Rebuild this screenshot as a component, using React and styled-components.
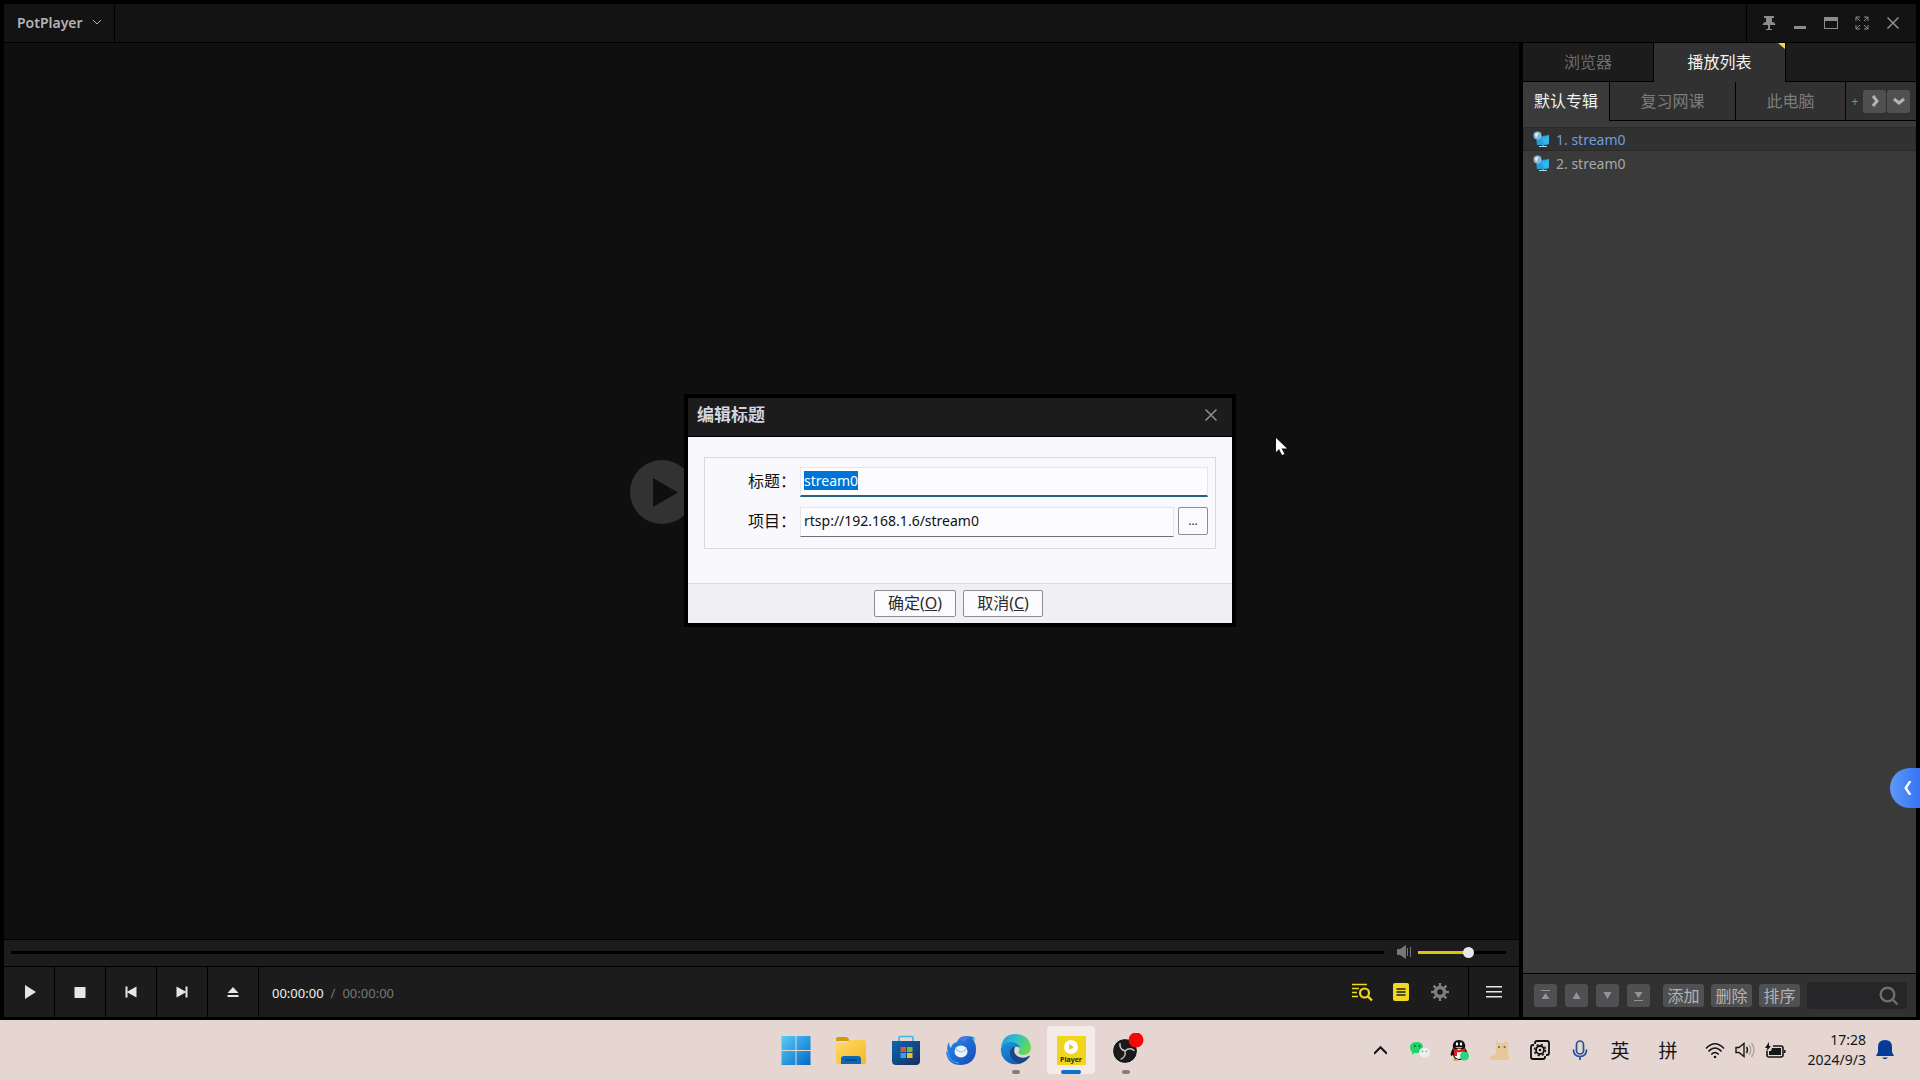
import React, { useEffect, useRef, useState } from "react";
import styled, { createGlobalStyle, css } from "styled-components";

const GlobalStyle = createGlobalStyle`
  * {
    box-sizing: border-box;
  }

  body {
    margin: 0;
    background: #000000;
    font-family: "Noto Sans", "Noto Sans CJK SC", sans-serif;
    overflow: hidden;
  }

  button,
  input {
    font-family: inherit;
    margin: 0;
  }

  button {
    border: 0;
    padding: 0;
    background: none;
    color: inherit;
    cursor: pointer;
  }

  svg {
    display: block;
    flex: none;
  }
`;

const Desktop = styled.div`
  position: relative;
  height: 100vh;
  display: flex;
  flex-direction: column;
`;

const PlayerWindow = styled.div`
  position: relative;
  flex: 1;
  min-height: 0;
  display: flex;
  flex-direction: column;
  gap: 1px;
  padding: 4px 4px 3px;
  background: #000000;
`;

const TitleBar = styled.header`
  height: 38px;
  display: flex;
  gap: 1px;
  flex: none;
`;

const AppMenu = styled.button`
  display: flex;
  align-items: center;
  gap: 8px;
  width: 110px;
  padding: 0 0 2px 13px;
  background: #131313;
  color: #b4b4b4;
  font-size: 14px;
  font-weight: 600;
`;

const TitleSpace = styled.div`
  flex: 1;
  background: #131313;
`;

const WindowButtons = styled.div`
  display: flex;
  align-items: center;
  padding: 0 8px 0 6px;
  background: #131313;
  color: #8c8c8c;
`;

const WindowButton = styled.button`
  width: 31px;
  height: 38px;
  display: flex;
  align-items: center;
  justify-content: center;
`;

const Main = styled.main`
  flex: 1;
  min-height: 0;
  display: flex;
  gap: 4px;
`;

const Player = styled.section`
  flex: 1;
  min-width: 0;
  display: flex;
  flex-direction: column;
  gap: 1px;
`;

const Video = styled.div`
  flex: 1;
  display: flex;
  align-items: center;
  justify-content: center;
  padding: 2px 200px 0 0;
  background: #0f0f0f;
`;

const SeekRow = styled.div`
  height: 26px;
  display: flex;
  align-items: center;
  padding: 0 13px 2px 7px;
  background: #1c1c1c;
  color: #777777;
`;

const track = css`
  height: 3px;
  background: ${({ $fill }) =>
    `linear-gradient(to right, #d8c414 ${$fill}%, #000000 ${$fill}%)`};
`;

const Slider = styled.input`
  appearance: none;
  height: 12px;
  background: none;

  &::-webkit-slider-runnable-track {
    ${track}
  }

  &::-webkit-slider-thumb {
    appearance: none;
    width: ${({ $thumb }) => $thumb}px;
    height: ${({ $thumb }) => $thumb}px;
    margin-top: -4px;
    border-radius: 50%;
    background: #e8e8ec;
  }
`;

const Seek = styled(Slider)`
  flex: 1;
  margin-right: 13px;
`;

const Volume = styled(Slider)`
  width: 88px;
  margin-left: 6px;
`;

const Controls = styled.div`
  height: 50px;
  display: flex;
  gap: 1px;
`;

const ControlButton = styled.button`
  width: 50px;
  display: flex;
  align-items: center;
  justify-content: center;
  background: #1c1c1c;
  color: #e6e6ea;
`;

const Time = styled.div`
  flex: 1;
  display: flex;
  align-items: center;
  gap: 7px;
  padding: 1px 0 0 13px;
  background: #1c1c1c;
  color: #f0f0f0;
  font-size: 13px;

  span {
    color: #777777;
  }
`;

const Tools = styled.div`
  display: flex;
  align-items: center;
  gap: 17px;
  margin-left: -1px;
  padding-right: 17px;
  background: #1c1c1c;
`;

const ToolButton = styled.button`
  width: 22px;
  height: 22px;
  display: flex;
  align-items: center;
  justify-content: center;
  color: ${({ $on }) => ($on ? "#f0d81e" : "#7e7e7e")};
`;

const Sidebar = styled.aside`
  width: 393px;
  flex: none;
  display: flex;
  flex-direction: column;
  gap: 1px;
`;

const Tabs = styled.div`
  height: 38px;
  flex: none;
  display: flex;
  gap: 1px;
`;

const Tab = styled.button`
  position: relative;
  width: ${({ $width }) => $width}px;
  background: #1c1c1c;
  color: #6c6c6c;
  font-size: 16px;
  line-height: 20px;

  ${({ $active }) =>
    $active &&
    css`
      margin-bottom: -1px;
      padding-bottom: 1px;
      background: #313131;
      color: #f2f2f2;
    `}
`;

const Corner = styled.i`
  position: absolute;
  top: 0;
  right: 0;
  border-top: 6px solid #f0d850;
  border-left: 7px solid transparent;
`;

const TabsRest = styled.div`
  flex: 1;
  background: #1c1c1c;
`;

const Album = styled(Tab)`
  background: ${({ $active }) => ($active ? "#3a3a3a" : "#313131")};
  color: ${({ $active }) => ($active ? "#f2f2f2" : "#7c7c7c")};
`;

const AlbumTools = styled.div`
  flex: 1;
  display: flex;
  align-items: center;
  justify-content: flex-end;
  gap: 1px;
  padding-right: 6px;
  background: #313131;
  color: #8c8c8c;
`;

const AddAlbum = styled.button`
  width: 14px;
  font-size: 12px;
`;

const SmallButton = styled.button`
  min-width: ${({ $text }) => ($text ? 41 : 23)}px;
  height: 23px;
  display: flex;
  align-items: center;
  justify-content: center;
  border-radius: 3px;
  background: #505052;
  color: #b4b4b4;
  font-size: 16px;
  line-height: 22px;
`;

const List = styled.ol`
  flex: 1;
  margin: 0;
  padding: 6px 0 0;
  list-style: none;
  background: #3a3a3a;
`;

const Track = styled.li`
  height: 24px;
  display: flex;
  align-items: center;
  gap: 6px;
  padding: 0 9px;
  border: 1px solid ${({ $current }) => ($current ? "#2a2a2a" : "transparent")};
  background: ${({ $current }) => ($current ? "#313131" : "transparent")};
  color: ${({ $current }) => ($current ? "#6c9ee0" : "#a8a8a8")};
  font-size: 14px;
`;

const ListBar = styled.div`
  height: 43px;
  display: flex;
  align-items: center;
  gap: 7px;
  padding: 0 9px 0 11px;
  background: #313131;
`;

const MoveButtons = styled.div`
  display: flex;
  gap: 8px;
  margin-right: 6px;

  button {
    color: #949494;
  }
`;

const Search = styled.label`
  flex: 1;
  min-width: 0;
  height: 27px;
  display: flex;
  align-items: center;
  padding: 0 8px 0 6px;
  border-radius: 3px;
  background: #262628;
  color: #6e6e6e;

  input {
    flex: 1;
    min-width: 0;
    border: 0;
    outline: 0;
    background: none;
    color: #cccccc;
  }
`;

const Overlay = styled.div`
  position: absolute;
  inset: 0;
  display: flex;
  align-items: center;
  justify-content: center;
`;

const Dialog = styled.form`
  width: 552px;
  border: 4px solid #000000;
  background: #f9f9fd;
`;

const DialogTitle = styled.div`
  height: 39px;
  display: flex;
  align-items: center;
  justify-content: space-between;
  padding: 0 14px 3px 9px;
  border-bottom: 1px solid #000000;
  background: #1c1c1c;
  color: #8c8c8c;

  h1 {
    margin: 0;
    color: #d4d4e0;
    font-size: 17px;
    font-weight: 700;
    line-height: 24px;
  }
`;

const DialogBody = styled.div`
  padding: 20px 16px 34px;
`;

const Group = styled.div`
  display: grid;
  grid-template-columns: 85px 1fr;
  column-gap: 10px;
  row-gap: 10px;
  padding: 9px 7px 11px 0;
  border: 1px solid #d8d8de;
  color: #101010;
  font-size: 16px;

  label {
    padding: 2px 0 0 43px;
    line-height: 24px;
    white-space: nowrap;
  }
`;

const Field = styled.div`
  display: flex;
  gap: 4px;
`;

const TextBox = styled.input`
  flex: 1;
  min-width: 0;
  height: 30px;
  padding: 0 3px 2px;
  border: 1px solid #e6e6ea;
  border-bottom: 1px solid #6e6e74;
  outline: 0;
  background: #fcfcfe;
  color: #101010;
  font-size: 14px;

  &:focus {
    border-bottom: 2px solid #22647c;
  }

  &::selection {
    background: #0074d4;
    color: #ffffff;
  }
`;

const PushButton = styled.button`
  width: ${({ $width }) => $width}px;
  height: 27px;
  border: 1px solid #8c8c92;
  border-radius: 2px;
  background: #fbfbfd;
  color: #2c2c2c;
  font-size: 16px;
  line-height: 22px;
`;

const BrowseButton = styled(PushButton)`
  height: 28px;
  font-size: 12px;
`;

const DialogFooter = styled.div`
  height: 40px;
  display: flex;
  align-items: center;
  justify-content: center;
  gap: 7px;
  padding-right: 3px;
  border-top: 1px solid #dadae0;
  background: #f0f0f4;
`;

const SideHandle = styled.button`
  position: absolute;
  right: 0;
  bottom: 272px;
  width: 30px;
  height: 40px;
  display: flex;
  align-items: center;
  justify-content: center;
  padding-left: 5px;
  border-radius: 20px 0 0 20px;
  background: linear-gradient(to right, #6098f8, #3474f4);
  color: #ffffff;
`;

const Pointer = styled.svg`
  position: absolute;
  left: 1276px;
  top: 437px;
`;

const Taskbar = styled.footer`
  height: 60px;
  flex: none;
  display: grid;
  grid-template-columns: 1fr auto 1fr;
  align-items: center;
  background: #e5d6d1;
`;

const Apps = styled.nav`
  grid-column: 2;
  display: flex;
  gap: 7px;
  padding-left: 2px;
`;

const AppButton = styled.button`
  width: 48px;
  height: 48px;
  display: flex;
  flex-direction: column;
  align-items: center;
  justify-content: flex-end;
  gap: 5px;
  border-radius: 4px;
  background: ${({ $active }) => ($active ? "#f4ebe9" : "transparent")};

  &::after {
    content: "";
    width: ${({ $active }) => ($active ? 20 : 8)}px;
    height: 4px;
    border-radius: 2px;
    background: ${({ $active, $running }) =>
      $active ? "#0c70c8" : $running ? "#8a7c76" : "transparent"};
  }
`;

const Tray = styled.div`
  display: flex;
  align-items: center;
  justify-content: flex-end;
  padding-right: 21px;
  color: #161616;
`;

const TrayButton = styled.button`
  width: ${({ $width }) => $width || 40}px;
  height: 40px;
  display: flex;
  align-items: center;
  justify-content: center;
  font-size: 19px;
`;

const Clock = styled.div`
  width: 72px;
  margin-right: 5px;
  text-align: right;
  font-size: 14px;
  line-height: 20px;
`;

const Chevron = ({ d, size = 12, width = 2 }) => (
  <svg width={size} height={size} viewBox="0 0 12 12" fill="none" stroke="currentColor" strokeWidth={width}>
    <path d={d} />
  </svg>
);

const CloseIcon = () => (
  <svg width="14" height="14" viewBox="0 0 14 14" stroke="currentColor" strokeWidth="1.6">
    <path d="M1.5 1.5l11 11M12.5 1.5l-11 11" />
  </svg>
);

const windowIcons = [
  [
    "置顶",
    <svg key="pin" width="14" height="16" viewBox="0 0 14 16" fill="currentColor">
      <path d="M2 1h10v2h-2v4c2 0 3 1 3.500 3h-13C1 8 2 7 4 7V3H2zM6 10h2v4h2v1H4v-1h2z" />
    </svg>
  ],
  [
    "最小化",
    <svg key="min" width="14" height="16" viewBox="0 0 14 16" fill="currentColor">
      <path d="M1 11h12v3H1z" />
    </svg>
  ],
  [
    "最大化",
    <svg key="max" width="14" height="14" viewBox="0 0 14 14" fill="currentColor">
      <path d="M0 1h14v12H0zM1 5v7h12V5z" fillRule="evenodd" />
    </svg>
  ],
  [
    "全屏",
    <svg key="full" width="14" height="14" viewBox="0 0 14 14" fill="none" stroke="currentColor">
      <path d="M1 5V1h4M9 1h4v4M13 9v4H9M5 13H1V9M1 1l4 4M13 1L9 5M13 13L9 9M1 13l4-4" />
    </svg>
  ],
  ["关闭", <CloseIcon key="close" />]
];

const controlIcons = [
  ["播放", "M4 1l11 7-11 7z"],
  ["停止", "M2.500 3h11v11h-11z"],
  ["上一个", "M2.500 2.500h2v5l9-5v11l-9-5v5h-2z"],
  ["下一个", "M13.500 2.500h-2v5l-9-5v11l9-5v5h2z"],
  ["打开", "M8 3l5.500 6h-11zM2.500 11h11v2h-11z"]
];

const moveIcons = [
  ["移到顶部", "M2 1h9v1H2zM6.500 4l4 6h-8z"],
  ["上移", "M6.500 3l4 7h-8z"],
  ["下移", "M6.500 10l4-7h-8z"],
  ["移到底部", "M2 11h9v1H2zM6.500 9l4-6h-8z"]
];

const StreamIcon = () => (
  <svg width="17" height="17" viewBox="0 0 17 17">
    <path d="M3 6l13-2v9l-4 1H4z" fill="#1ea0dc" />
    <path d="M8 8l8-4v9l-4 1z" fill="#48c0f0" opacity=".6" />
    <path d="M6 15.500h8M10 14v2" stroke="#b4d4e0" />
    <circle cx="4.500" cy="4.500" r="4" fill="#8ab8d8" />
    <path d="M2 4c1-3 4-2 3-1s0 3-2 3z" fill="#e4f4fc" />
  </svg>
);

const WindowsLogo = () => (
  <svg width="30" height="30" viewBox="0 0 30 30">
    <defs>
      <linearGradient id="win" x1="0" y1="0" x2="1" y2="1">
        <stop offset="0" stopColor="#58ccf8" />
        <stop offset="1" stopColor="#0468c8" />
      </linearGradient>
    </defs>
    <path d="M.5 1h14v14H.5zM15.500 1h14v14h-14zM.5 16h14v14H.5zM15.500 16h14v14h-14z" fill="url(#win)" />
  </svg>
);

const FolderLogo = () => (
  <svg width="32" height="30" viewBox="0 0 32 30">
    <defs>
      <linearGradient id="folder" x1="0" y1="0" x2="1" y2="1">
        <stop offset="0" stopColor="#ffd968" />
        <stop offset="1" stopColor="#f4b824" />
      </linearGradient>
    </defs>
    <path d="M1 4q0-2 2-2h8q1 0 2 1l2 3H1z" fill="#d8980c" />
    <path d="M1 8h10q2 0 3-3h15q2 0 2 2v20q0 2-2 2H3q-2 0-2-2z" fill="url(#folder)" />
    <path d="M6 29v-5q0-3 3-3h14q3 0 3 3v5z" fill="#0c68b4" />
    <path d="M10 25h12" stroke="#083c74" strokeWidth="1.500" />
  </svg>
);

const StoreLogo = () => (
  <svg width="30" height="30" viewBox="0 0 30 30">
    <defs>
      <linearGradient id="store" x1="0" y1="0" x2="1" y2="1">
        <stop offset="0" stopColor="#0868b4" />
        <stop offset="1" stopColor="#1c2c5c" />
      </linearGradient>
    </defs>
    <path d="M8 8V3q0-1.500 1.500-1.500h11Q22 1.500 22 3v5" fill="none" stroke="#38b8e8" strokeWidth="1.600" />
    <path d="M1 6h28v20q0 4-4 4H5q-4 0-4-4z" fill="url(#store)" />
    <path d="M9.500 12H15v5H9.500z" fill="#e85030" />
    <path d="M16 12h5.500v5H16z" fill="#80b828" />
    <path d="M9.500 18H15v5H9.500z" fill="#28a8e8" />
    <path d="M16 18h5.500v5H16z" fill="#f8bc1c" />
  </svg>
);

const ThunderbirdLogo = () => (
  <svg width="32" height="30" viewBox="0 0 32 30">
    <defs>
      <linearGradient id="bird" x1="0" y1="0" x2="1" y2="1">
        <stop offset="0" stopColor="#2490ec" />
        <stop offset="1" stopColor="#1848b8" />
      </linearGradient>
    </defs>
    <path
      d="M4 7Q1 12 3 18L1 16Q2 30 16 30Q31 29 31 14Q31 9 29 6L30 3Q27 1 21 1Q14 1 12 7Q7 8 6 13Q4 11 4 7z"
      fill="url(#bird)"
    />
    <path d="M14 5Q18 1 24 2Q21 4 20 7Q17 5 14 5z" fill="#5c70e0" />
    <path d="M27 3l3 0-1 3z" fill="#58c4f4" />
    <ellipse cx="16" cy="16.500" rx="6.500" ry="6" fill="#e8f4fc" />
    <path d="M10.500 13.500q5.500 7 11 0" fill="none" stroke="#9cc4ec" strokeWidth="1.200" />
    <path d="M3 18q1 9 11 10" fill="none" stroke="#48b0f4" strokeWidth="1.500" opacity=".7" />
  </svg>
);

const EdgeLogo = () => (
  <svg width="32" height="32" viewBox="0 0 32 32">
    <defs>
      <linearGradient id="edgeTop" x1="0" y1="0" x2="1" y2=".4">
        <stop offset="0" stopColor="#1c98dc" />
        <stop offset=".5" stopColor="#2cc0cc" />
        <stop offset="1" stopColor="#64d854" />
      </linearGradient>
      <linearGradient id="edgeSide" x1="0" y1="0" x2=".6" y2="1">
        <stop offset="0" stopColor="#1c98e0" />
        <stop offset="1" stopColor="#1460b8" />
      </linearGradient>
    </defs>
    <path d="M1 14Q3 1 16 1Q30 2 31 15Q30 22 23 22Q17 21 19 18Q21 13 15 11Q7 9 1 14z" fill="url(#edgeTop)" />
    <path d="M1 15Q4 8 12 9Q19 10 20 16Q19 13 15 14Q9 19 13 25Q17 30 22 30Q11 34 4 26Q0 21 1 15z" fill="url(#edgeSide)" />
    <path d="M13 14Q8 18 11 24Q15 31 22 30Q27 28 30 23Q29 22 27 24Q20 26 16 22Q13 19 15 14z" fill="#144888" />
  </svg>
);

const PlayerLabel = styled.span`
  width: 29px;
  height: 29px;
  display: flex;
  flex-direction: column;
  align-items: center;
  gap: 1px;
  padding-top: 4px;
  border-radius: 1px;
  background: #f2d41c;
  color: #2c2808;
  font-size: 7px;
  font-weight: 700;
  line-height: 9px;
`;

const PlayerLogo = () => (
  <PlayerLabel>
    <svg width="14" height="14" viewBox="0 0 14 14">
      <circle cx="7" cy="7" r="7" fill="#ffffff" />
      <path d="M5 4l5 3-5 3z" fill="#e8c818" />
    </svg>
    Player
  </PlayerLabel>
);

const ObsLogo = () => (
  <svg width="36" height="32" viewBox="0 0 36 32">
    <circle cx="17" cy="18" r="12.500" fill="#1a1a1c" stroke="#f4f4f4" />
    <g fill="none" stroke="#c8c8c8" strokeWidth="1.400">
      <path d="M17 18q-6-2-5-8" />
      <path d="M17 18q-6-2-5-8" transform="rotate(120 17 18)" />
      <path d="M17 18q-6-2-5-8" transform="rotate(240 17 18)" />
    </g>
    <circle cx="28" cy="7" r="7.500" fill="#fb0404" />
  </svg>
);

const WeChatIcon = () => (
  <svg width="20" height="18" viewBox="0 0 20 18">
    <path d="M7 1q6 0 6 5.500T7 12l-3 0-2 2V11Q0 9 0 6.500 0 1 7 1z" fill="#20d46c" />
    <circle cx="5" cy="5" r="1" fill="#106838" />
    <circle cx="9.500" cy="5" r="1" fill="#106838" />
    <ellipse cx="14.500" cy="11.500" rx="5.500" ry="5" fill="#eef0f0" />
    <circle cx="12.500" cy="10.500" r=".8" fill="#8c9494" />
    <circle cx="16.500" cy="10.500" r=".8" fill="#8c9494" />
  </svg>
);

const QQIcon = () => (
  <svg width="20" height="22" viewBox="0 0 20 22">
    <path d="M3 9Q2 1 9 1t6 8q4 6 2 8l-2-1q-1 5-6 5t-6-5l-2 1q-1-3 2-8z" fill="#101010" />
    <ellipse cx="9" cy="15" rx="5" ry="5" fill="#f4f4f4" />
    <ellipse cx="7" cy="5" rx="1.200" ry="1.800" fill="#ffffff" />
    <ellipse cx="11" cy="5" rx="1.200" ry="1.800" fill="#ffffff" />
    <path d="M5 8q4 3 8 0z" fill="#f0a418" />
    <path d="M3 9q6 4 12 0v3q-4 2-8 1v4H4v-5z" fill="#e41c28" />
    <path d="M3 20h5v2H4z" fill="#f0a418" />
    <circle cx="14.500" cy="17" r="4.500" fill="#28d878" />
  </svg>
);

const CatIcon = () => (
  <svg width="20" height="20" viewBox="0 0 20 20">
    <path d="M6 0l3 3h5l3-3 1 5v8l1 3v4H1q-2-2 0-4l4-1 1-3z" fill="#e8c898" />
    <circle cx="9" cy="7" r="1" fill="#74543c" />
    <circle cx="14.500" cy="7" r="1" fill="#74543c" />
  </svg>
);

const CaptureIcon = () => (
  <svg width="20" height="20" viewBox="0 0 20 20" fill="none" stroke="#101010" strokeWidth="1.800">
    <path d="M5 4V3q0-2 2-2h10q2 0 2 2v10q0 2-2 2h-1" />
    <path d="M4 5H3Q1 5 1 7v10q0 2 2 2h10q2 0 2-2v-1" />
    <circle cx="10" cy="10" r="4" />
    <circle cx="10" cy="10" r="5.600" strokeWidth="1.400" strokeDasharray="2.200 2.200" />
    <circle cx="10" cy="10" r="1.300" fill="#101010" stroke="none" />
  </svg>
);

const MicIcon = () => (
  <svg width="16" height="21" viewBox="0 0 16 21" fill="none" stroke="#24509c" strokeWidth="1.700">
    <rect x="4.500" y="1" width="7" height="13" rx="3.500" />
    <path d="M1.500 9.500q0 7 6.500 7t6.500-7M8 16.500V20" />
  </svg>
);

const WifiIcon = () => (
  <svg width="20" height="17" viewBox="0 0 20 17" fill="none" stroke="currentColor" strokeWidth="1.500">
    <path d="M1 6.500q9-9.500 18 0M3.500 9.500q6.500-7 13 0M6.300 12.500q3.700-4 7.400 0" />
    <circle cx="10" cy="15" r="1.300" fill="currentColor" stroke="none" />
  </svg>
);

const SpeakerIcon = () => (
  <svg width="20" height="16" viewBox="0 0 20 16" fill="none" stroke="currentColor" strokeWidth="1.400">
    <path d="M1 5.500h3L9 1.500v13l-5-4H1z" />
    <path d="M11.500 5q2 3 0 6" />
    <path d="M14 3q3.500 5 0 10M16.500 1q5 7 0 14" stroke="#b0a4a0" />
  </svg>
);

const BatteryIcon = () => (
  <svg width="21" height="17" viewBox="0 0 21 17">
    <path d="M8 4h8q2 0 2 2v7q0 2-2 2H4q-2 0-2-2V9" fill="none" stroke="#161616" strokeWidth="1.600" />
    <path d="M7 6h9v7H4V9h2zM19 8h1.500v3H19zM4 0L0 6h2.500L1 10l5-6H4z" fill="#161616" />
  </svg>
);

const BellIcon = () => (
  <svg width="18" height="20" viewBox="0 0 18 20" fill="#043c98">
    <path d="M9 0q7 0 7 7v5l2 4H0l2-4V7q0-7 7-7zM6 17.500h6q-3 3.500-6 0z" />
  </svg>
);

const EditTitleDialog = ({ onClose }) => {
  const titleRef = useRef(null);
  const [title, setTitle] = useState("stream0");
  const [item, setItem] = useState("rtsp://192.168.1.6/stream0");

  useEffect(() => {
    titleRef.current.focus();
    titleRef.current.select();
  }, []);

  const submit = e => {
    e.preventDefault();
    onClose();
  };

  return (
    <Overlay>
      <Dialog onSubmit={submit}>
        <DialogTitle>
          <h1>编辑标题</h1>
          <button type="button" aria-label="关闭" onClick={onClose}>
            <CloseIcon />
          </button>
        </DialogTitle>
        <DialogBody>
          <Group>
            <label htmlFor="title">标题：</label>
            <Field>
              <TextBox
                id="title"
                ref={titleRef}
                spellCheck={false}
                value={title}
                onChange={e => setTitle(e.target.value)}
              />
            </Field>
            <label htmlFor="item">项目：</label>
            <Field>
              <TextBox
                id="item"
                spellCheck={false}
                value={item}
                onChange={e => setItem(e.target.value)}
              />
              <BrowseButton type="button" $width={30}>
                ...
              </BrowseButton>
            </Field>
          </Group>
        </DialogBody>
        <DialogFooter>
          <PushButton $width={82}>
            确定(<u>O</u>)
          </PushButton>
          <PushButton type="button" $width={80} onClick={onClose}>
            取消(<u>C</u>)
          </PushButton>
        </DialogFooter>
      </Dialog>
    </Overlay>
  );
};

const Playlist = () => (
  <Sidebar>
    <Tabs>
      <Tab $width={130}>浏览器</Tab>
      <Tab $width={131} $active>
        播放列表
        <Corner />
      </Tab>
      <TabsRest />
    </Tabs>
    <Tabs>
      <Album $width={86} $active>
        默认专辑
      </Album>
      <Album $width={125}>复习网课</Album>
      <Album $width={109}>此电脑</Album>
      <AlbumTools>
        <AddAlbum>+</AddAlbum>
        <SmallButton aria-label="下一页">
          <Chevron d="M4 1l4 5-4 5" width={3} />
        </SmallButton>
        <SmallButton aria-label="更多">
          <Chevron d="M1 4l5 4 5-4" width={3} />
        </SmallButton>
      </AlbumTools>
    </Tabs>
    <List>
      <Track $current>
        <StreamIcon />
        1. stream0
      </Track>
      <Track>
        <StreamIcon />
        2. stream0
      </Track>
    </List>
    <ListBar>
      <MoveButtons>
        {moveIcons.map(([label, d]) => (
          <SmallButton key={label} aria-label={label}>
            <svg width="13" height="13" viewBox="0 0 13 13" fill="currentColor">
              <path d={d} />
            </svg>
          </SmallButton>
        ))}
      </MoveButtons>
      <SmallButton $text>添加</SmallButton>
      <SmallButton $text>删除</SmallButton>
      <SmallButton $text>排序</SmallButton>
      <Search>
        <input aria-label="搜索" />
        <svg width="20" height="20" viewBox="0 0 20 20" fill="none" stroke="currentColor" strokeWidth="2.400">
          <circle cx="8.500" cy="8.500" r="6.800" />
          <path d="M13.500 13.500l5 5" />
        </svg>
      </Search>
    </ListBar>
  </Sidebar>
);

const WindowsTaskbar = () => (
  <Taskbar>
    <Apps>
      <AppButton aria-label="开始">
        <WindowsLogo />
      </AppButton>
      <AppButton aria-label="文件资源管理器">
        <FolderLogo />
      </AppButton>
      <AppButton aria-label="Microsoft Store">
        <StoreLogo />
      </AppButton>
      <AppButton aria-label="Thunderbird">
        <ThunderbirdLogo />
      </AppButton>
      <AppButton aria-label="Edge" $running>
        <EdgeLogo />
      </AppButton>
      <AppButton aria-label="PotPlayer" $active>
        <PlayerLogo />
      </AppButton>
      <AppButton aria-label="OBS" $running>
        <ObsLogo />
      </AppButton>
    </Apps>
    <Tray>
      <TrayButton aria-label="显示隐藏的图标">
        <Chevron d="M0 9l6-6 6 6" size={13} />
      </TrayButton>
      <TrayButton aria-label="微信">
        <WeChatIcon />
      </TrayButton>
      <TrayButton aria-label="QQ">
        <QQIcon />
      </TrayButton>
      <TrayButton aria-label="猫">
        <CatIcon />
      </TrayButton>
      <TrayButton aria-label="录制">
        <CaptureIcon />
      </TrayButton>
      <TrayButton aria-label="麦克风">
        <MicIcon />
      </TrayButton>
      <TrayButton>英</TrayButton>
      <TrayButton $width={56}>拼</TrayButton>
      <TrayButton $width={38} aria-label="网络">
        <WifiIcon />
      </TrayButton>
      <TrayButton $width={22} aria-label="音量">
        <SpeakerIcon />
      </TrayButton>
      <TrayButton $width={38} aria-label="电池">
        <BatteryIcon />
      </TrayButton>
      <Clock>
        17:28
        <br />
        2024/9/3
      </Clock>
      <TrayButton $width={28} aria-label="通知">
        <BellIcon />
      </TrayButton>
    </Tray>
  </Taskbar>
);

const App = () => {
  const [dialogOpen, setDialogOpen] = useState(true);
  const [volume, setVolume] = useState(58);
  const [position, setPosition] = useState(0);

  return (
    <Desktop>
      <GlobalStyle />
      <PlayerWindow>
        <TitleBar>
          <AppMenu>
            PotPlayer
            <Chevron d="M2 4l4 4 4-4" width={1} />
          </AppMenu>
          <TitleSpace />
          <WindowButtons>
            {windowIcons.map(([label, icon]) => (
              <WindowButton key={label} aria-label={label}>
                {icon}
              </WindowButton>
            ))}
          </WindowButtons>
        </TitleBar>
        <Main>
          <Player>
            <Video>
              <svg width="64" height="64" viewBox="0 0 64 64">
                <circle cx="32" cy="32" r="32" fill="#323232" />
                <path d="M23 18l25 14.500L23 47z" fill="#0f0f0f" />
              </svg>
            </Video>
            <SeekRow>
              <Seek
                type="range"
                aria-label="进度"
                $thumb={0}
                $fill={position}
                value={position}
                onChange={e => setPosition(Number(e.target.value))}
              />
              <svg width="15" height="14" viewBox="0 0 15 14" fill="currentColor">
                <path d="M0 4h3l6-4v14l-6-4H0zM10 3h1v8h-1zM13 2h1v10h-1z" />
              </svg>
              <Volume
                type="range"
                aria-label="音量"
                $thumb={11}
                $fill={volume}
                value={volume}
                onChange={e => setVolume(Number(e.target.value))}
              />
            </SeekRow>
            <Controls>
              {controlIcons.map(([label, d]) => (
                <ControlButton key={label} aria-label={label}>
                  <svg width="16" height="16" viewBox="0 0 16 16" fill="currentColor">
                    <path d={d} />
                  </svg>
                </ControlButton>
              ))}
              <Time>
                00:00:00 <span>/</span> <span>00:00:00</span>
              </Time>
              <Tools>
                <ToolButton $on aria-label="搜索列表">
                  <svg width="22" height="20" viewBox="0 0 22 20" fill="none" stroke="currentColor">
                    <path d="M1 2.500h15M1 6.500h7M1 10.500h5M1 14.500h6" strokeWidth="1.300" />
                    <circle cx="13.500" cy="11" r="4.500" strokeWidth="2.200" />
                    <path d="M17 14.500l4 4" strokeWidth="2.400" />
                  </svg>
                </ToolButton>
                <ToolButton $on aria-label="播放列表">
                  <svg width="16" height="18" viewBox="0 0 16 18">
                    <rect width="16" height="18" rx="2" fill="currentColor" />
                    <path d="M3.500 6h9M3.500 9h9M3.500 12h9" stroke="#1c1c1c" strokeWidth="1.500" />
                  </svg>
                </ToolButton>
                <ToolButton aria-label="设置">
                  <svg width="18" height="18" viewBox="0 0 18 18" fill="none" stroke="currentColor">
                    <circle cx="9" cy="9" r="4.500" strokeWidth="3.400" />
                    <path
                      d="M9 0v3M9 15v3M0 9h3M15 9h3M2.600 2.600l2.200 2.200M13.200 13.200l2.200 2.200M15.400 2.600l-2.200 2.200M4.800 13.200l-2.200 2.200"
                      strokeWidth="2.400"
                    />
                  </svg>
                </ToolButton>
              </Tools>
              <ControlButton aria-label="菜单">
                <svg width="16" height="14" viewBox="0 0 16 14" fill="currentColor">
                  <path d="M0 1h16v1.500H0zM0 6h16v1.500H0zM0 11h16v1.500H0z" />
                </svg>
              </ControlButton>
            </Controls>
          </Player>
          <Playlist />
        </Main>
        {dialogOpen && <EditTitleDialog onClose={() => setDialogOpen(false)} />}
      </PlayerWindow>
      <WindowsTaskbar />
      <SideHandle aria-label="展开">
        <Chevron d="M8 0L4 6l4 6" size={14} />
      </SideHandle>
      <Pointer width="12" height="19" viewBox="0 0 12 19">
        <path d="M0 1v14l3-3 3 6 2.500-1-3-5.500H11z" fill="#ffffff" />
      </Pointer>
    </Desktop>
  );
};

export default App;
